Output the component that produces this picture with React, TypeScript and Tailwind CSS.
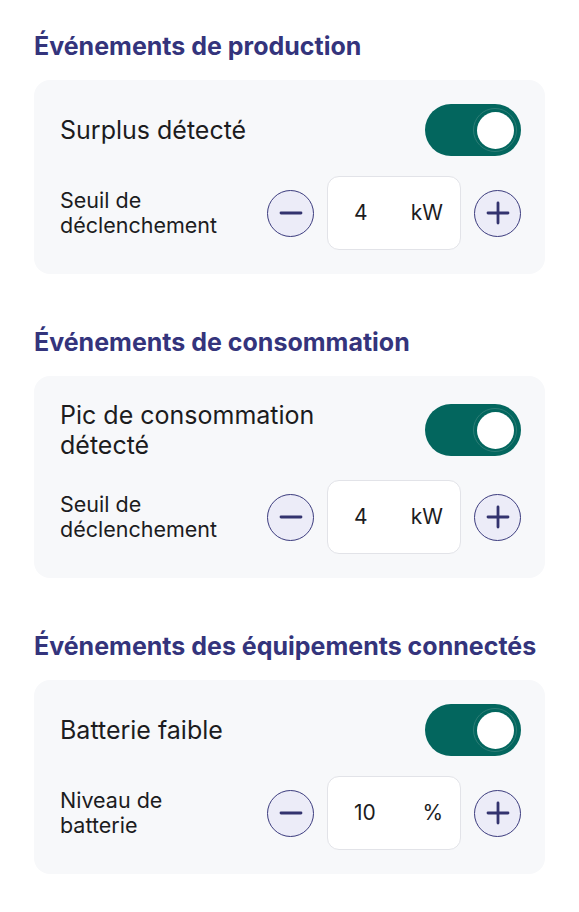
import { useState } from "react";

type Section = {
	title: string;
	toggleLabel: string;
	stepLabel: string;
	value: number;
	unit: string;
};

const sections: Section[] = [
	{ title: "Événements de production", toggleLabel: "Surplus détecté", stepLabel: "Seuil de déclenchement", value: 4, unit: "kW" },
	{ title: "Événements de consommation", toggleLabel: "Pic de consommation détecté", stepLabel: "Seuil de déclenchement", value: 4, unit: "kW" },
	{ title: "Événements des équipements connectés", toggleLabel: "Batterie faible", stepLabel: "Niveau de batterie", value: 10, unit: "%" },
];

const Toggle = ({ on, onClick }: { on: boolean; onClick: () => void }) => (
	<button
		onClick={onClick}
		className={`relative flex h-[52px] w-[96px] shrink-0 items-center rounded-full px-[4px] ${on ? "justify-end bg-[#03665e]" : "justify-start bg-[#c9cbd2]"}`}
	>
		<span className="flex h-[44px] w-[44px] items-center justify-center rounded-full border border-[#2c7c75]">
			<span className="h-[37px] w-[37px] rounded-full bg-white" />
		</span>
	</button>
);

const RoundButton = ({ plus, onClick }: { plus?: boolean; onClick: () => void }) => (
	<button
		onClick={onClick}
		className="flex h-[47px] w-[47px] shrink-0 items-center justify-center rounded-full border-[1.5px] border-[#3c3c7e] bg-[#ececf8]"
	>
		<svg width="26" height="26" viewBox="0 0 26 26" fill="none" stroke="#33336f" strokeWidth="2.8" strokeLinecap="round">
			<line x1="3" y1="13" x2="23" y2="13" />
			{plus && <line x1="13" y1="3" x2="13" y2="23" />}
		</svg>
	</button>
);

const EventCard = ({ section }: { section: Section }) => {
	const [on, setOn] = useState(true);
	const [value, setValue] = useState(section.value);

	return (
		<div>
			<h2 className="mb-[19px] text-[25px] font-bold leading-[30px] text-[#34347c]">{section.title}</h2>
			<div className="flex flex-col gap-5 rounded-2xl bg-[#f7f8fa] py-6 pl-[26px] pr-6">
				<div className="flex items-center justify-between gap-4">
					<span className="max-w-[280px] text-[25px] leading-[30px] text-[#1c1c1e]">{section.toggleLabel}</span>
					<Toggle on={on} onClick={() => setOn(!on)} />
				</div>
				<div className="flex items-center justify-between">
					<span className="w-[165px] text-[21.5px] leading-[25px] text-[#1c1c1e]">{section.stepLabel}</span>
					<div className="flex items-center gap-[13px]">
						<RoundButton onClick={() => setValue(value - 1)} />
						<div className="flex h-[74px] w-[134px] items-center justify-between rounded-xl border border-[#e2e3e8] bg-white pl-[26px] pr-[17px] text-[21px] text-[#1c1c1e]">
							<span>{value}</span>
							<span>{section.unit}</span>
						</div>
						<RoundButton plus onClick={() => setValue(value + 1)} />
					</div>
				</div>
			</div>
		</div>
	);
};

export default function App() {
	return (
		<div className="flex min-h-screen flex-col gap-[53px] bg-white px-[34px] pt-[31px] font-['Inter',sans-serif]">
			{sections.map((section, index) => (
				<EventCard key={index} section={section} />
			))}
		</div>
	);
}
